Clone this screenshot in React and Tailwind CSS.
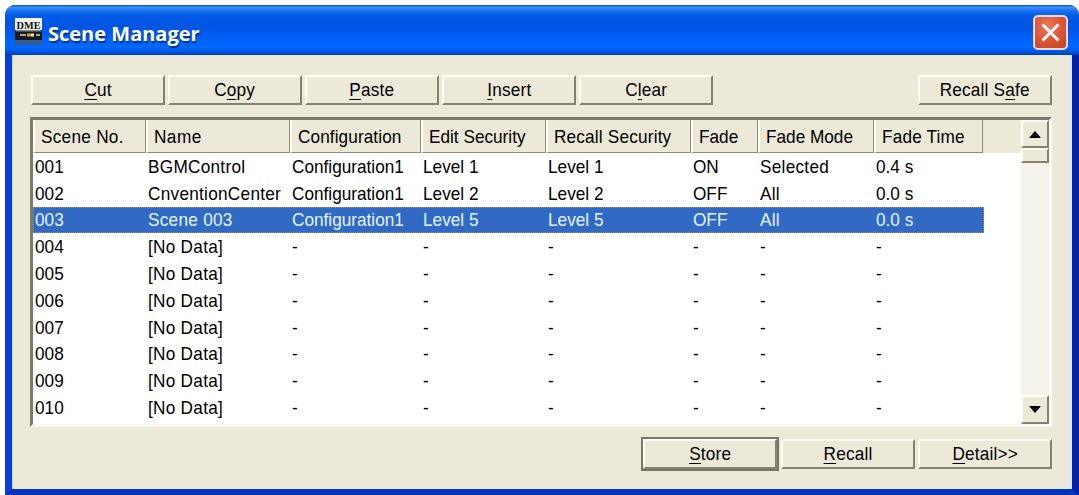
import { clsx } from "clsx";

const columns = [
  { key: "no", label: "Scene No.", width: "w-[113px]", head: "tracking-[0.3px]" },
  { key: "name", label: "Name", width: "w-[144px]", head: "tracking-[0.5px]", cell: "tracking-[0.3px]" },
  { key: "config", label: "Configuration", width: "w-[131px]", head: "tracking-[0.1px]" },
  { key: "edit", label: "Edit Security", width: "w-[125px]" },
  { key: "recall", label: "Recall Security", width: "w-[145px]", head: "tracking-[0.2px]" },
  { key: "fade", label: "Fade", width: "w-[67px]" },
  { key: "mode", label: "Fade Mode", width: "w-[116px]", cell: "tracking-[0.3px]" },
  { key: "time", label: "Fade Time", width: "w-[109px]", head: "tracking-[0.2px]" },
];

const scenes = [
  { no: "001", name: "BGMControl", config: "Configuration1", edit: "Level 1", recall: "Level 1", fade: "ON", mode: "Selected", time: "0.4 s" },
  { no: "002", name: "CnventionCenter", config: "Configuration1", edit: "Level 2", recall: "Level 2", fade: "OFF", mode: "All", time: "0.0 s" },
  { no: "003", name: "Scene 003", config: "Configuration1", edit: "Level 5", recall: "Level 5", fade: "OFF", mode: "All", time: "0.0 s", selected: true },
  ...["004", "005", "006", "007", "008", "009", "010"].map((no) => ({
    no, name: "[No Data]", config: "-", edit: "-", recall: "-", fade: "-", mode: "-", time: "-",
  })),
];

const raised =
  "bg-[#ece9d8] border-2 border-t-[#fffef4] border-l-[#fffef4] border-r-[#85816f] border-b-[#85816f]";

function Label({ children, className }) {
  return (
    <span className={clsx("inline-block origin-left scale-x-[0.905] whitespace-nowrap", className)}>
      {children}
    </span>
  );
}

// `hot` is the underlined access key
function Button({ before = "", hot, after, isDefault }) {
  const button = (
    <button className={clsx("flex h-[30px] w-[134px] items-center justify-center pb-[2px] leading-none", raised)}>
      <Label className="!origin-center tracking-[0.2px]">
        {before}
        <span className="underline decoration-1 underline-offset-[3px] [text-decoration-skip-ink:none]">{hot}</span>
        {after}
      </Label>
    </button>
  );
  if (!isDefault) return button;
  return <div className="-mr-px border-2 border-[#77746a]">{button}</div>;
}

function AppIcon() {
  return (
    <svg className="shrink-0 overflow-visible" width="27" height="27" viewBox="0 0 27 27">
      <rect width="27" height="27" fill="#315d93" />
      <rect width="27" height="12" fill="#f3f3e8" />
      <text x="1.5" y="10.5" textLength="24" lengthAdjust="spacingAndGlyphs" fontFamily="Liberation Serif, serif" fontWeight="bold" fontSize="11" fill="#111">DME</text>
      <rect y="12" width="27" height="10" fill="#17191c" />
      <rect x="1" y="12" width="25" height="1.5" fill="#7d8791" />
      <path d="M5 17h6M21 17h4" stroke="#a8a69b" strokeWidth="2" />
      <path d="M12 17h4" stroke="#d69b48" strokeWidth="3" />
      <path d="M16 17h3" stroke="#f4e7a4" strokeWidth="3" />
    </svg>
  );
}

function TitleBar() {
  return (
    <header className="flex h-[50px] items-center bg-[linear-gradient(to_bottom,#0753d0_0%,#3b91fb_5%,#1c73f2_11%,#0459e5_22%,#0054e3_45%,#0062fa_70%,#0067ff_85%,#0053dd_94%,#003dba_100%)] pl-[10px] pr-[11px]">
      <div className="mt-[3px]">
        <AppIcon />
      </div>
      <h1 className="ml-[6px] whitespace-nowrap pt-[8px] font-['Open_Sans',sans-serif] text-[20px] font-bold leading-none text-white [text-shadow:1px_2px_1px_#0a3284]">
        Scene Manager
      </h1>
      <button className="ml-auto mt-[4px] flex size-[35px] items-center justify-center rounded-[5px] border-2 border-[#e4dcec] bg-[radial-gradient(circle_at_40%_30%,#e77a5c,#dc5636_50%,#c3431f)]">
        <svg width="19" height="19" viewBox="0 0 19 19" fill="none" stroke="#fff" strokeWidth="3">
          <path d="M1.500 1.500l16 16M17.500 1.500l-16 16" />
        </svg>
      </button>
    </header>
  );
}

function ScrollBar() {
  return (
    <div className="flex w-[28px] flex-col bg-[#f5f4eb]">
      <div className={clsx("flex h-[28px] items-center justify-center", raised)}>
        <svg width="12" height="7" viewBox="0 0 12 7"><path d="M6 0l6 7H0z" /></svg>
      </div>
      <div className={clsx("h-[15px]", raised)} />
      <div className={clsx("mt-auto flex h-[29px] items-center justify-center", raised)}>
        <svg width="12" height="7" viewBox="0 0 12 7"><path d="M0 0h12L6 7z" /></svg>
      </div>
    </div>
  );
}

function SceneList() {
  return (
    <div className="flex h-[310px] border-[3px] border-t-[#7d7a6d] border-l-[#7d7a6d] border-r-[#fbfaf2] border-b-[#fbfaf2] bg-white">
      <div className="flex-1">
        <div className="flex h-[33px] bg-[#ece9d8]">
          {columns.map((col) => (
            <div
              key={col.key}
              className={clsx(
                "flex shrink-0 items-center border-b border-r border-l-2 border-[#8f8b7a] border-l-[#fffef4] pl-[6px] leading-none",
                col.width
              )}
            >
              <Label className={col.head}>{col.label}</Label>
            </div>
          ))}
        </div>
        <div className="flex h-[267.8px] flex-col">
          {scenes.map((scene) => (
            <div
              key={scene.no}
              className={clsx(
                "flex w-[951px] flex-1 items-center leading-none",
                scene.selected && "bg-[#316ac5] text-[#e4f4ff] outline-dotted outline-1 -outline-offset-1 outline-[#a9905c]"
              )}
            >
              {columns.map((col) => (
                <div key={col.key} className={clsx("shrink-0 pl-[2px]", col.width)}>
                  <Label className={col.cell}>{scene[col.key]}</Label>
                </div>
              ))}
            </div>
          ))}
        </div>
      </div>
      <ScrollBar />
    </div>
  );
}

export default function App() {
  return (
    <div className="h-[495px] w-[1079px] overflow-hidden bg-white pl-[5px] pt-[5px] font-['Liberation_Sans',Arial,sans-serif] text-[19px] text-black">
      <div className="flex h-[490px] flex-col overflow-hidden rounded-t-[10px] bg-[#0831c9]">
        <TitleBar />
        <div className="flex flex-1 border-b-[6px] border-l-[7px] border-r-[7px] border-b-[#0734bd] border-l-[#073fd8] border-r-[#0420a5]">
          <main className="flex-1 border-l border-r-4 border-l-[#c6d9ee] border-r-[#dce9f1] bg-[#ece9d8] pl-[17px] pr-[16px] pt-[20px]">
            <div className="flex gap-[3px] pl-px">
              <Button hot="C" after="ut" />
              <Button before="C" hot="o" after="py" />
              <Button hot="P" after="aste" />
              <Button hot="I" after="nsert" />
              <Button before="C" hot="l" after="ear" />
              <div className="ml-auto">
                <Button before="Recall S" hot="a" after="fe" />
              </div>
            </div>
            <div className="mt-[12px]">
              <SceneList />
            </div>
            <div className="mt-[10px] flex items-center justify-end gap-[3px]">
              <Button hot="S" after="tore" isDefault />
              <Button hot="R" after="ecall" />
              <Button hot="D" after="etail>>" />
            </div>
          </main>
        </div>
      </div>
    </div>
  );
}
